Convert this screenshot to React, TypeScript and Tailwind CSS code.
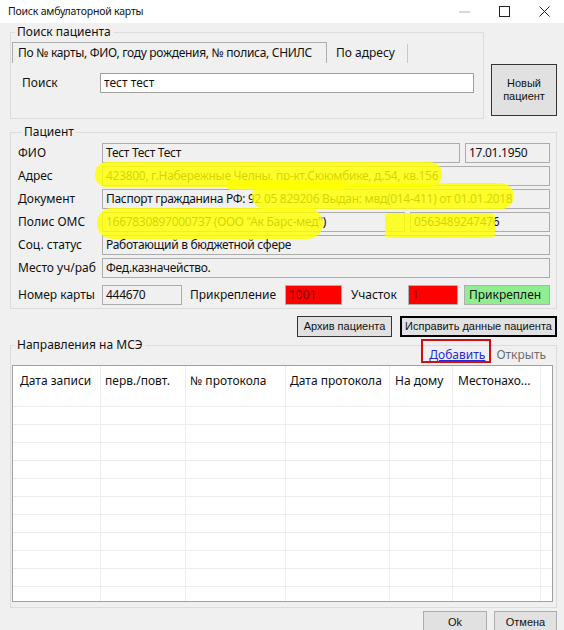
import React from 'react';

const cols = [
  { w: 'w-[88px]', pl: 'pl-[7px]', title: 'Дата записи' },
  { w: 'w-[85px]', pl: 'pl-[4px]', title: 'перв./повт.' },
  { w: 'w-[100px]', pl: 'pl-[4px]', title: '№ протокола' },
  { w: 'w-[104px]', pl: 'pl-[4px]', title: 'Дата протокола' },
  { w: 'w-[63px]', pl: 'pl-[5px]', title: 'На дому' },
  { w: 'w-[88px]', pl: 'pl-[5px]', title: 'Местонахо...' },
];

function Field({ className, children }: { className: string; children?: React.ReactNode }) {
  return (
    <div className={`h-[20px] border border-[#acacac] bg-[#f0f0f0] pl-[3px] leading-[18px] tracking-[-0.3px] whitespace-nowrap overflow-hidden ${className}`}>
      {children}
    </div>
  );
}

function Row({ label, children }: { label: string; children: React.ReactNode }) {
  return (
    <div className="flex items-center">
      <span className="w-[84px] shrink-0">{label}</span>
      {children}
    </div>
  );
}

export default function App() {
  return (
    <div className="relative w-[564px] h-[630px] overflow-hidden bg-[#f0f0f0] text-[12px] text-[#111] font-['Noto_Sans',sans-serif]">
      {/* title bar */}
      <div className="h-[23px] bg-white flex items-center justify-between">
        <span className="pl-[8px] text-[10.5px] tracking-[-0.2px]">Поиск амбулаторной карты</span>
        <div className="flex items-center h-full">
          <div className="w-[40px] flex justify-center">
            <svg width="11" height="2" viewBox="0 0 11 2"><path d="M0 1h11" stroke="#b0b0b0" strokeWidth="1" /></svg>
          </div>
          <div className="w-[40px] flex justify-center">
            <svg width="11" height="11" viewBox="0 0 11 11"><rect x="0.5" y="0.5" width="10" height="10" fill="none" stroke="#222" /></svg>
          </div>
          <div className="w-[40px] flex justify-center">
            <svg width="11" height="11" viewBox="0 0 11 11"><path d="M0.5 0.5l10 10M10.5 0.5l-10 10" stroke="#222" /></svg>
          </div>
        </div>
      </div>

      <div className="pl-[10px] pr-[7px]">
        {/* search group */}
        <div className="flex items-start mt-[2px]">
          <fieldset className="w-[474px] border border-[#dcdcdc] pb-[25px]">
            <legend className="ml-[4px] px-[2px] leading-[14px]">Поиск пациента</legend>
            <div className="flex mt-[3px] h-[21px]">
              <div className="ml-[1px] w-[315px] border-t border-l border-r border-[#adadad] pl-[5px] leading-[19px] tracking-[-0.3px] whitespace-nowrap">
                По № карты, ФИО, году рождения, № полиса, СНИЛС
              </div>
              <div className="mt-[2px] w-[81px] border-r border-[#c8c8c8] pl-[9px] leading-[17px]">По адресу</div>
            </div>
            <div className="flex items-center mt-[10px]">
              <span className="w-[89px] pl-[11px]">Поиск</span>
              <div className="w-[374px] h-[20px] bg-white border border-[#a0a0a0] pl-[3px] leading-[18px]">тест тест</div>
            </div>
          </fieldset>
          <button className="ml-[7px] mt-[39px] w-[66px] h-[52px] border border-[#333] bg-[#e1e1e1] text-[11px] leading-[13px] font-['Liberation_Sans',sans-serif]">
            Новый
            <br />
            пациент
          </button>
        </div>

        {/* patient group */}
        <fieldset className="mt-[6px] w-[547px] border border-[#dcdcdc] pl-[7px] pr-[6px] pb-[3px]">
          <legend className="ml-[4px] px-[2px] leading-[14px]">Пациент</legend>
          <div className="flex flex-col gap-[3px] pt-[4px]">
            <Row label="ФИО">
              <Field className="w-[358px]">Тест Тест Тест</Field>
              <Field className="ml-[5px] w-[85px]">17.01.1950</Field>
            </Row>
            <Row label="Адрес">
              <Field className="w-[448px]">423800, г.Набережные Челны, пр-кт.Сююмбике, д.54, кв.156</Field>
            </Row>
            <Row label="Документ">
              <Field className="w-[448px]">Паспорт гражданина РФ: 92 05 829206 Выдан: мвд(014-411) от 01.01.2018</Field>
            </Row>
            <Row label="Полис ОМС">
              <Field className="w-[303px]">1667830897000737 (ООО "Ак Барс-мед")</Field>
              <Field className="ml-[5px] w-[140px]">0563489247476</Field>
            </Row>
            <Row label="Соц. статус">
              <Field className="w-[448px]">Работающий в бюджетной сфере</Field>
            </Row>
            <Row label="Место уч/раб">
              <Field className="w-[448px]">Фед.казначейство.</Field>
            </Row>
            <div className="flex items-center mt-[4px]">
              <span className="w-[84px] shrink-0">Номер карты</span>
              <Field className="w-[80px]">444670</Field>
              <span className="w-[103px] pl-[8px]">Прикрепление</span>
              <div className="w-[57px] h-[20px] bg-[#ff0000] border border-[#b0b0b0] pl-[3px] leading-[18px] text-[#8a0000]">1001</div>
              <span className="w-[66px] pl-[9px]">Участок</span>
              <div className="w-[50px] h-[20px] bg-[#ff0000] border border-[#b0b0b0] pl-[3px] leading-[18px] text-[#8a0000]">1</div>
              <div className="ml-[6px] w-[86px] h-[20px] bg-[#90ee90] border border-[#b0b0b0] pl-[4px] leading-[18px]">Прикреплен</div>
            </div>
          </div>
        </fieldset>

        {/* buttons */}
        <div className="w-[547px] flex justify-end gap-[8px] mt-[7px] text-[11px] font-['Liberation_Sans',sans-serif]">
          <button className="w-[95px] h-[21px] border border-[#333] bg-[#e1e1e1]">Архив пациента</button>
          <button className="w-[157px] h-[21px] border-2 border-black bg-[#e1e1e1]">Исправить данные пациента</button>
        </div>

        {/* MSE group */}
        <fieldset className="mt-[1px] w-[547px] border border-[#dcdcdc] pb-[5px]">
          <legend className="ml-[4px] px-[2px] leading-[14px]">Направления на МСЭ</legend>
          <div className="-mt-[4px] mb-[3px] h-[14px] flex justify-end items-center gap-[11px] pr-[10px] leading-[14px]">
            <span className="text-[#2a2ad6] underline">Добавить</span>
            <span className="text-[#6d6d6d]">Открыть</span>
          </div>
          <div className="ml-[1px] w-[541px] h-[237px] border border-[#a0a0a0] bg-white overflow-hidden">
            <div className="flex h-[40px]">
              {cols.map((c) => (
                <div key={c.title} className={`${c.w} ${c.pl} shrink-0 border-r border-[#ececec] pt-[7px] leading-[16px] whitespace-nowrap`}>
                  {c.title}
                </div>
              ))}
              <div className="flex-1" />
            </div>
            {Array.from({ length: 11 }).map((_, r) => (
              <div key={r} className="flex h-[18px] border-t border-[#ececec]">
                {cols.map((c) => (
                  <div key={c.title} className={`${c.w} shrink-0 border-r border-[#ececec]`} />
                ))}
                <div className="flex-1" />
              </div>
            ))}
          </div>
        </fieldset>

        <div className="w-[547px] flex justify-end gap-[7px] mt-[3px] text-[11px] font-['Liberation_Sans',sans-serif]">
          <button className="w-[64px] h-[23px] border border-[#adadad] bg-[#e1e1e1]">Ok</button>
          <button className="w-[63px] h-[23px] border border-[#adadad] bg-[#e1e1e1]">Отмена</button>
        </div>
      </div>

      {/* yellow marker highlights */}
      <div className="absolute left-[95px] top-[162px] w-[347px] h-[25px] rounded-[12px] bg-[rgba(255,255,0,0.82)]" />
      <div className="absolute left-[226px] top-[180px] w-[120px] h-[10px] rounded-[6px] bg-[rgba(255,255,0,0.82)]" />
      <div className="absolute left-[252px] top-[183px] w-[262px] h-[26px] rounded-[13px] bg-[rgba(255,255,0,0.82)]" />
      <div className="absolute left-[97px] top-[208px] w-[226px] h-[31px] rounded-[15px] bg-[rgba(255,255,0,0.82)]" />
      <div className="absolute left-[385px] top-[213px] w-[110px] h-[25px] rounded-[4px] bg-[rgba(255,255,0,0.82)]" />

      {/* red annotation frame */}
      <div className="absolute left-[421px] top-[339px] w-[70px] h-[24px] border-2 border-[#d01010]" />
    </div>
  );
}
